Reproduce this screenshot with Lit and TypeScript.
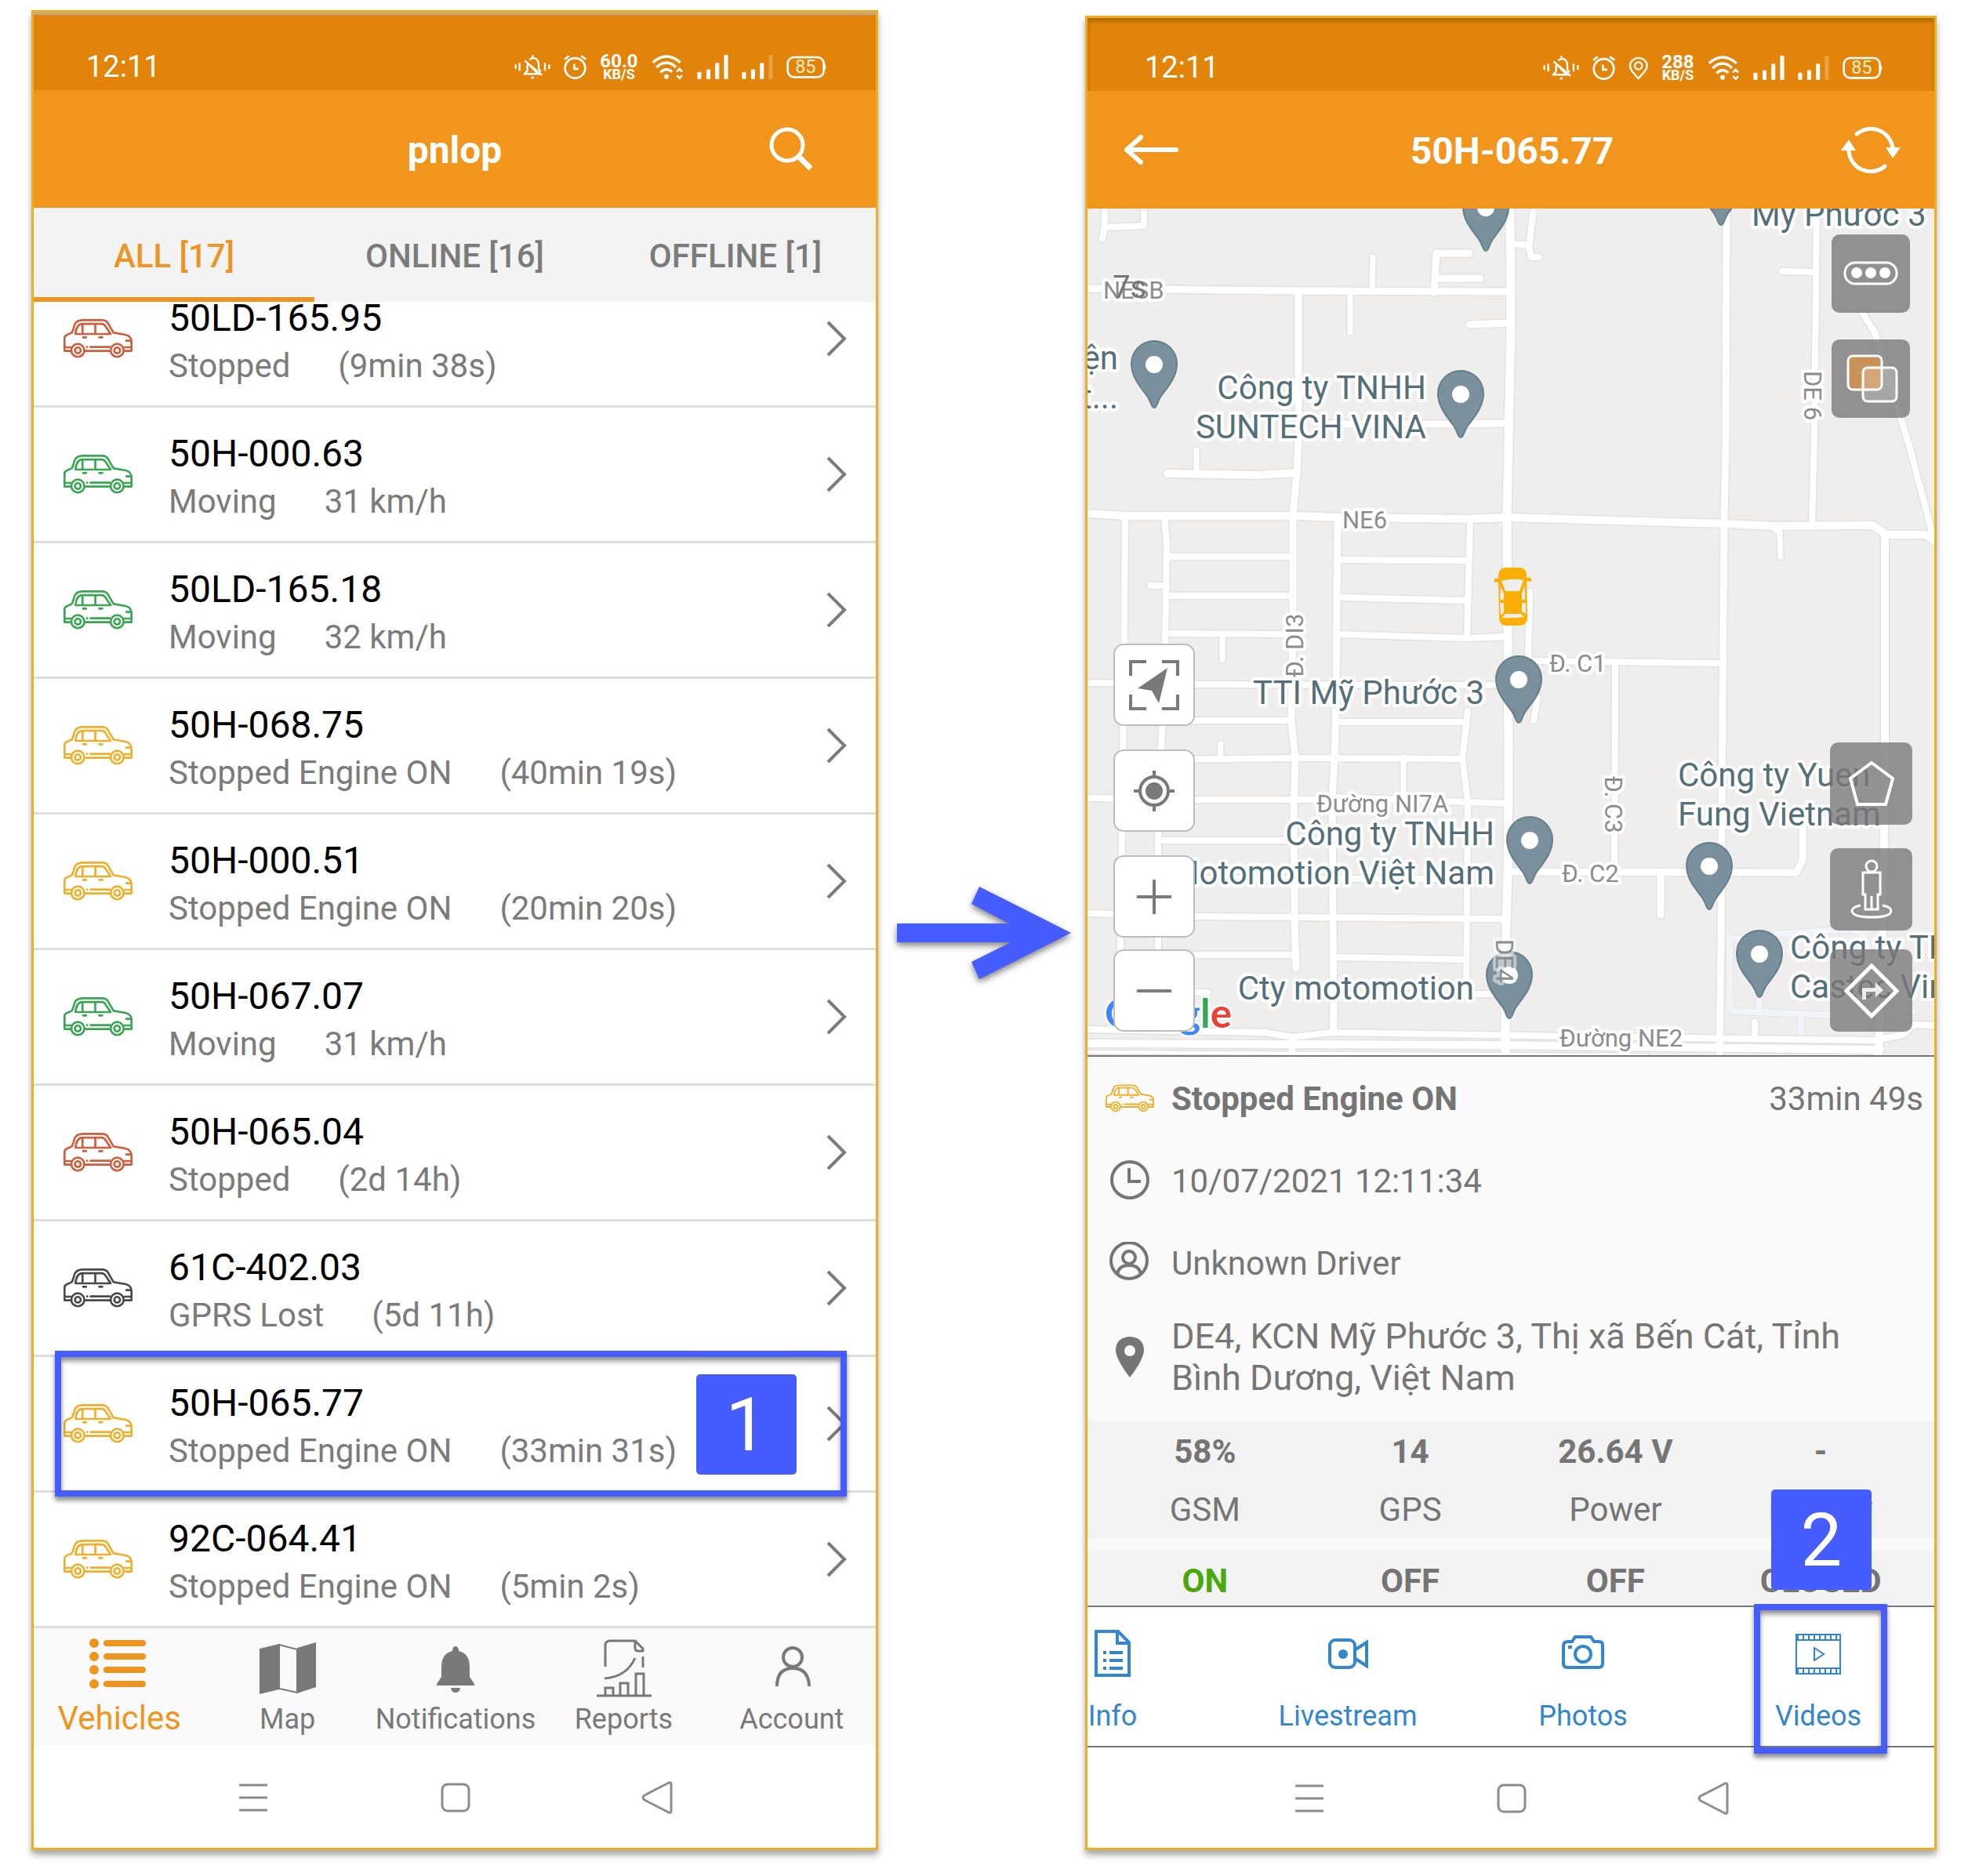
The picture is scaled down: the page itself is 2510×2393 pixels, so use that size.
import { LitElement, html, svg, css, nothing } from "lit";
import { customElement, property } from "lit/decorators.js";
import { classMap } from "lit/directives/class-map.js";

type State = "stopped" | "moving" | "idle" | "lost";

interface Vehicle {
  plate: string;
  state: State;
  status: string;
  detail: string;
  step?: string;
}

const VEHICLES: Vehicle[] = [
  { plate: "50LD-165.95", state: "stopped", status: "Stopped", detail: "(9min 38s)" },
  { plate: "50H-000.63", state: "moving", status: "Moving", detail: "31 km/h" },
  { plate: "50LD-165.18", state: "moving", status: "Moving", detail: "32 km/h" },
  { plate: "50H-068.75", state: "idle", status: "Stopped Engine ON", detail: "(40min 19s)" },
  { plate: "50H-000.51", state: "idle", status: "Stopped Engine ON", detail: "(20min 20s)" },
  { plate: "50H-067.07", state: "moving", status: "Moving", detail: "31 km/h" },
  { plate: "50H-065.04", state: "stopped", status: "Stopped", detail: "(2d 14h)" },
  { plate: "61C-402.03", state: "lost", status: "GPRS Lost", detail: "(5d 11h)" },
  { plate: "50H-065.77", state: "idle", status: "Stopped Engine ON", detail: "(33min 31s)", step: "1" },
  { plate: "92C-064.41", state: "idle", status: "Stopped Engine ON", detail: "(5min 2s)" },
];

const carIcon = html`<svg class="car" viewBox="62 120 265 150" aria-hidden="true">
  <g fill="none" stroke="currentColor" stroke-width="8" stroke-linejoin="round" stroke-linecap="round">
    <path d="M90 242H66V192Q66 184 76 180L94 172Q100 160 103 147Q108 125 134 124H210Q226 124 233 136L254 172L300 180Q323 186 323 206V242H294M144 242H241" />
    <path d="M108 177Q112 138 134 138H208Q218 138 223 147L243 177ZM135 139V176M184 139V176" />
    <path d="M137 190H149M199 190H211M303 203H321M67 228H90M295 228H321M166 227H240M152 227h1" />
    <circle cx="117" cy="240" r="25" /><circle cx="117" cy="240" r="11" />
    <circle cx="268" cy="240" r="25" /><circle cx="268" cy="240" r="11" />
  </g>
</svg>`;

const chevron = html`<svg class="chevron" viewBox="0 0 28 48" aria-hidden="true">
  <path d="M3 3L24 24L3 45" fill="none" stroke="currentColor" stroke-width="4" />
</svg>`;

@customElement("status-bar")
export class StatusBar extends LitElement {
  @property() speed = "";
  @property({ type: Boolean }) located = false;

  static styles = css`
    :host { display: flex; align-items: center; justify-content: space-between; color: #fff; }
    .time { font-size: 38px; line-height: 44px; }
    .icons { display: flex; align-items: center; gap: 17px; }
    svg { display: block; height: 31px; }
    .rate { display: flex; flex-direction: column; align-items: center; font-weight: 700; font-size: 24px; line-height: 20px; }
    .unit { font-size: 18px; line-height: 14px; }
    .battery text { font-size: 70px; }
  `;

  render() {
    return html`
      <span class="time">12:11</span>
      <div class="icons">
        <svg viewBox="40 46 138 93" fill="none" stroke="#fff" stroke-width="7">
          <path d="M45 83V100M60 77V107M157 77V107M173 83V100M75 119H144M80 118L90 106V86M98 65Q108 54 122 60Q132 66 133 82V100L141 110M80 68L146 124M104 133H115M110 47V56" />
          <path d="M90 78V106L82 118H128Z" stroke-width="5" />
        </svg>
        <svg viewBox="230 49 87 92" fill="none" stroke="#fff" stroke-width="8">
          <circle cx="273" cy="99" r="38" /><path d="M270 83V102H286M233 66L250 53M296 53L314 66" />
        </svg>
        ${this.located
          ? html`<svg viewBox="366 46 76 93" fill="none" stroke="#fff" stroke-width="7">
              <path d="M404 134L380 106Q371 94 372 81A33 32 0 0 1 437 81Q438 94 428 106Z" stroke-linejoin="round" />
              <circle cx="404" cy="85" r="14" />
            </svg>`
          : nothing}
        <span class="rate"><span>${this.speed}</span><span class="unit">KB/S</span></span>
        <svg viewBox="693 45 124 93" fill="none" stroke="#fff" stroke-width="10">
          <path d="M698 74Q750 28 803 74M712 93Q750 58 786 92M727 112Q750 90 772 110" />
          <circle cx="750" cy="128" r="9" fill="#fff" stroke="none" />
          <path d="M790 109L800 99L810 109M790 124L800 134L810 124" stroke-width="8" />
        </svg>
        <svg viewBox="859 47 118 91" fill="#fff">
          <rect x="860" y="111" width="15" height="27" rx="4" /><rect x="894" y="101" width="15" height="37" rx="4" />
          <rect x="927" y="77" width="15" height="61" rx="4" /><rect x="960" y="47" width="15" height="91" rx="4" />
        </svg>
        <svg viewBox="859 47 118 91" fill="#fff">
          <rect x="860" y="111" width="15" height="27" rx="4" /><rect x="894" y="101" width="15" height="37" rx="4" />
          <rect x="927" y="77" width="15" height="61" rx="4" /><rect x="960" y="47" width="15" height="91" rx="4" opacity=".25" />
        </svg>
        <svg class="battery" viewBox="1199 46 152 93">
          <rect x="1204" y="55" width="138" height="76" rx="24" fill="none" stroke="#fff" stroke-width="8" />
          <path d="M1343 80q7 2 7 13t-7 13z" fill="#fff" />
          <text x="1272" y="116" text-anchor="middle" fill="#ffeec8">85</text>
        </svg>
      </div>
    `;
  }
}

@customElement("system-keys")
export class SystemKeys extends LitElement {
  static styles = css`
    :host { display: flex; align-items: center; justify-content: center; background: #fff; }
    button { width: 258px; height: 100px; padding: 2px 0 0 2px; border: 0; background: none; display: flex; align-items: center; justify-content: center; }
    svg { width: 42px; height: 42px; }
  `;

  render() {
    return html`
      <button aria-label="Recent apps">
        <svg viewBox="0 0 42 42"><path d="M3 5H39M3 21H39M3 37H39" stroke="#8c8c8c" stroke-width="3" /></svg>
      </button>
      <button aria-label="Home">
        <svg viewBox="0 0 42 42"><rect x="4" y="4" width="34" height="34" rx="7" fill="none" stroke="#8c8c8c" stroke-width="3" /></svg>
      </button>
      <button aria-label="Back">
        <svg viewBox="0 0 42 42"><path d="M35 2Q38 1 38 4V38Q38 41 35 40L4 24Q0 21 4 18Z" fill="none" stroke="#8c8c8c" stroke-width="3" stroke-linejoin="round" /></svg>
      </button>
    `;
  }
}

const NAV_ITEMS = [
  {
    label: "Vehicles",
    icon: svg`<g fill="currentColor"><circle cx="10" cy="13" r="6"/><circle cx="10" cy="30" r="6"/><circle cx="10" cy="47" r="6"/><circle cx="10" cy="65" r="6"/>
      <rect x="22" y="9" width="54" height="8" rx="4"/><rect x="22" y="26" width="54" height="8" rx="4"/><rect x="22" y="43" width="54" height="8" rx="4"/><rect x="22" y="61" width="54" height="8" rx="4"/></g>`,
  },
  {
    label: "Map",
    icon: svg`<path d="M6 20L31 14V72L6 78ZM54 19L78 12V69L54 77Z" fill="currentColor"/><path d="M31 15L54 21V76L31 71Z" fill="none" stroke="currentColor" stroke-width="2"/>`,
  },
  {
    label: "Notifications",
    icon: svg`<path d="M42 17Q46 17 46 23Q60 26 60 44V56L66 65V67H18V65L24 56V44Q24 26 38 23Q38 17 42 17ZM36 70H48Q47 76 42 76Q37 76 36 70Z" fill="currentColor"/>`,
  },
  {
    label: "Reports",
    icon: svg`<path d="M19 43V16Q19 10 25 10H57L67 20V24M57 10V19Q57 23 61 23H67M67 30V44M18 58Q46 56 57 32M8 80H78M19 80V70H29V80M38 80V64H48V80M58 80V52H68V80" fill="none" stroke="currentColor" stroke-width="3"/>`,
  },
  {
    label: "Account",
    icon: svg`<g fill="none" stroke="currentColor" stroke-width="4"><circle cx="43" cy="31" r="12"/><path d="M23 68V66Q24 45 43 45T64 66V68"/></g>`,
  },
];

@customElement("vehicle-list")
export class VehicleList extends LitElement {
  static styles = css`
    :host { display: block; background: #fff; }
    * { box-sizing: border-box; }
    status-bar { height: 99px; box-sizing: border-box; padding: 39px 63px 0 67px; background: #e18409; box-shadow: inset 0 3px 0 #bdaa8c; }
    .header { display: grid; grid-template-columns: 1fr auto 1fr; align-items: center; height: 150px; padding: 0 80px; background: #f1951d; color: #fff; }
    h1 { grid-column: 2; margin: 0; padding-top: 3px; font-size: 48px; line-height: 60px; font-weight: 700; }
    button { font: inherit; color: inherit; border: 0; padding: 0; background: none; }
    .search { justify-self: end; display: flex; }
    .search svg { width: 56px; height: 56px; }
    .tabs { display: grid; grid-template-columns: repeat(3, 1fr); height: 120px; background: #f3f3f3; color: #7b7b7b; }
    .tab { padding-top: 3px; font-size: 42px; font-weight: 500; }
    .tab.active { color: #ea9526; box-shadow: inset 0 -6px 0 #ee9520; }
    ul { margin: 0; padding: 0; list-style: none; overflow: hidden; }
    li { position: relative; height: 173px; border-bottom: 3px solid #dedede; }
    li:first-child { margin-top: -38px; }
    .row { display: flex; align-items: center; height: 170px; padding: 0 36px 0 38px; color: #7b7b7b; text-decoration: none; }
    .car { display: block; width: 88px; height: 50px; margin-right: 46px; flex: none; }
    .stopped { color: #cf5f3c; }
    .moving { color: #3aa653; }
    .idle { color: #eeb02c; }
    .lost { color: #4a4a4a; }
    .text { flex: 1; align-self: flex-start; padding-top: 29px; }
    .plate { display: block; font-size: 48px; line-height: 60px; color: #000; }
    .sub { display: flex; gap: 61px; font-size: 42px; line-height: 62px; }
    .chevron { width: 28px; height: 48px; }
    .mark { position: absolute; z-index: 1; inset: -8px 37px -8px 27px; border: 8px solid #455cff; box-shadow: 0 5px 6px rgba(0, 0, 0, 0.45), inset 0 5px 6px rgba(0, 0, 0, 0.45); }
    .step { position: absolute; z-index: 2; top: 22px; right: 101px; width: 128px; height: 128px; border-radius: 5px; background: #455cff; color: #fff; font-size: 94px; line-height: 130px; text-align: center; }
    nav { display: grid; grid-template-columns: repeat(5, 1fr); height: 149px; padding: 6px 0 0 2px; background: #f9f9f9; color: #7b7879; }
    .item { display: flex; flex-direction: column; align-items: center; color: inherit; text-decoration: none; font-size: 36px; line-height: 52px; }
    .item svg { width: 84px; height: 84px; }
    .item.active { color: #ee9520; font-size: 42px; line-height: 50px; }
    system-keys { height: 131px; }
  `;

  render() {
    return html`
      <status-bar speed="60.0"></status-bar>
      <header class="header">
        <h1>pnlop</h1>
        <button class="search" aria-label="Search">
          <svg viewBox="0 0 56 56" fill="none" stroke="#fff">
            <circle cx="23" cy="23" r="20" stroke-width="5" /><path d="M37 37L53 53" stroke-width="7" />
          </svg>
        </button>
      </header>
      <div class="tabs" role="tablist">
        <button class="tab active" role="tab" aria-selected="true">ALL [17]</button>
        <button class="tab" role="tab" aria-selected="false">ONLINE [16]</button>
        <button class="tab" role="tab" aria-selected="false">OFFLINE [1]</button>
      </div>
      <ul>
        ${VEHICLES.map(
          (v) => html`<li>
            <a class="row" href="#${v.plate}">
              <span class=${v.state}>${carIcon}</span>
              <span class="text">
                <span class="plate">${v.plate}</span>
                <span class="sub"><span>${v.status}</span><span>${v.detail}</span></span>
              </span>
              ${chevron}
            </a>
            ${v.step ? html`<div class="mark"></div><div class="step">${v.step}</div>` : nothing}
          </li>`
        )}
      </ul>
      <nav>
        ${NAV_ITEMS.map(
          (n, i) => html`<a class=${classMap({ item: true, active: i === 0 })} href="#${n.label}">
            <svg viewBox="0 0 84 84" aria-hidden="true">${n.icon}</svg>${n.label}
          </a>`
        )}
      </nav>
      <system-keys></system-keys>
    `;
  }
}

interface Road {
  d: string;
  w: number;
}

const ROADS: Road[] = [
  { w: 11, d: "M1926 266L1927 414L1922 660L1924 980L1923 1112L1920 1213V1346" },
  { w: 9, d: "M1389 368L1656 371L1927 372M1832 323H1874M1832 323L1829 373M1833 355H1888M1874 414L1926 412M1827 541L1921 540M1690 541H1830" },
  { w: 9, d: "M1656 371V560L1654 603L1649 657V793L1647 920L1652 967L1650 1030L1651 1173L1653 1235" },
  { w: 7, d: "M1722 371V424M1751 328L1750 373M1526 574V602M1559 810V842M1557 949L1556 966M1790 966V1020" },
  { w: 8, d: "M1956 266L1950 314L1953 328H1963M1930 311L1950 313M1409 266V289L1406 304M1409 290L1459 288V266" },
  { w: 9, d: "M2202 266L2201 560L2199 667L2197 893L2195 1197L2193 1346" },
  { w: 8, d: "M2317 266L2314 560L2311 670M2273 346L2314 347" },
  { w: 8, d: "M2376 400L2391 424L2436 572L2467 690" },
  { w: 10, d: "M1489 604L1606 606L1654 603M1387 655L1434 658H1649L1713 660L1870 662L1924 660L2199 668L2263 671L2388 670L2406 682H2456L2470 692" },
  { w: 7, d: "M2260 672L2270 680L2271 711" },
  { w: 10, d: "M2404 682V980L2401 1197L2396 1346" },
  { w: 8, d: "M1435 658L1433 893L1429 1210V1313M1485 658L1488 693L1486 820L1477 1070V1230" },
  { w: 8, d: "M1488 710H1649M1488 760H1649M1467 747H1488M1488 808L1649 809" },
  { w: 9, d: "M1706 660L1704 893L1702 970L1699 1020L1701 1317" },
  { w: 8, d: "M1709 714L1874 715M1709 762L1871 766M1709 809L1870 814L1924 812M1875 663L1871 814M1872 907L1865 967L1872 1023L1870 1268" },
  { w: 8, d: "M1389 871L1527 873L1906 874H1924M1486 919H1645M1706 921H1870M1480 969L1652 967L1865 968" },
  { w: 8, d: "M1951 755L1949 840M1949 843L2195 846M1961 890L1956 919M2060 847L2059 1112" },
  { w: 8, d: "M1389 1018L1527 1020H1677L1700 1017L1924 1025M1481 1072H1713M1480 1121H1870" },
  { w: 9, d: "M1926 1112L2291 1113L2299 1097V1053M2118 1113V1167" },
  { w: 8, d: "M1389 1165L1527 1169L1920 1172M1480 1218H1652M1706 1221L1870 1224M1527 1266H1540M1870 1268H1920" },
  { w: 8, d: "M1389 1313L1613 1317L1649 1323L1699 1317L2220 1325L2391 1327L2427 1320L2441 1307L2467 1308M2238 1304V1324M1648 1323V1346" },
  { w: 10, d: "M1389 1331L1900 1333L2398 1339" },
  { w: 4, d: "M1389 1342L2100 1346" },
];

const LANES = "M2206 1196V1280Q2206 1290 2216 1290L2360 1296L2440 1290M2297 1294V1322M2244 1270V1290M2206 1198L2260 1192L2350 1186Q2380 1184 2382 1210V1240";

const PINS = [
  [1895, 320], [2195, 287], [1472, 520], [1863, 558], [1937, 922],
  [1951, 1127], [2180, 1160], [2244, 1272], [1925, 1299],
];

interface Place {
  x: number;
  y: number;
  text: string;
  end?: boolean;
}

const PLACES: Place[] = [
  { x: 2234, y: 288, text: "Mỹ Phước 3" },
  { x: 1426, y: 471, text: "Bệnh viện", end: true },
  { x: 1426, y: 521, text: "Quốc t...", end: true },
  { x: 1819, y: 509, text: "Công ty TNHH", end: true },
  { x: 1819, y: 559, text: "SUNTECH VINA", end: true },
  { x: 1893, y: 898, text: "TTI Mỹ Phước 3", end: true },
  { x: 1906, y: 1078, text: "Công ty TNHH", end: true },
  { x: 1906, y: 1128, text: "Motomotion Việt Nam", end: true },
  { x: 2140, y: 1003, text: "Công ty Yuen" },
  { x: 2140, y: 1053, text: "Fung Vietnam" },
  { x: 2283, y: 1223, text: "Công ty TNHH" },
  { x: 2283, y: 1273, text: "Castec Vina" },
  { x: 1880, y: 1275, text: "Cty motomotion", end: true },
];

const STREETS = [
  { x: 1407, y: 381, r: 0, text: "NESB" },
  { x: 1712, y: 674, r: 0, text: "NE6" },
  { x: 1662, y: 864, r: -90, text: "Đ. DI3" },
  { x: 1976, y: 857, r: 0, text: "Đ. C1" },
  { x: 1679, y: 1036, r: 0, text: "Đường NI7A" },
  { x: 1992, y: 1125, r: 0, text: "Đ. C2" },
  { x: 2047, y: 990, r: 90, text: "Đ. C3" },
  { x: 2301, y: 473, r: 90, text: "DE 6" },
  { x: 1989, y: 1335, r: 0, text: "Đường NE2" },
];

@customElement("map-view")
export class MapView extends LitElement {
  static styles = css`
    :host { display: block; position: relative; border-bottom: 2px solid #777; }
    .map { display: block; width: 100%; height: auto; background: #efeeec; }
    .place { font-size: 42px; fill: #546f7a; stroke: #fff; stroke-width: 8px; stroke-linejoin: round; paint-order: stroke; }
    .street { font-size: 31px; fill: #8c8c8c; stroke: #fff; stroke-width: 8px; stroke-linejoin: round; paint-order: stroke; }
    .faint { stroke: rgba(255, 255, 255, 0.5); }
    .counter { font-size: 40px; fill: #757575; }
    .logo { font-family: Lato, sans-serif; font-size: 51px; font-weight: 700; stroke: #fff; stroke-width: 5px; paint-order: stroke; }
    .tools { position: absolute; display: flex; flex-direction: column; }
    .left { left: 33px; bottom: 30px; gap: 30px; }
    .top { right: 31px; top: 33px; gap: 34px; }
    .bottom { right: 28px; bottom: 30px; gap: 30px; }
    button { box-sizing: border-box; display: flex; align-items: center; justify-content: center; width: 105px; height: 105px; padding: 0; border: 0; border-radius: 10px; background: rgba(122, 120, 121, 0.8); }
    .top button { width: 100px; height: 100px; }
    .left button { width: 104px; border: 2px solid #bdbdbd; border-radius: 13px; background: #fff; }
    .left button:last-child { margin-top: -15px; }
    .bottom button:last-child { margin-top: -6px; }
    button svg { width: 84px; height: 84px; }
  `;

  render() {
    return html`
      <svg class="map" viewBox="1387 266 1080 1080" role="img" aria-label="Map">
        <g fill="none" stroke-linejoin="round" stroke-linecap="round">
          <path d=${LANES} stroke="#e2e5e9" stroke-width="10" /><path d=${LANES} stroke="#f1f4f8" stroke-width="8" />
          ${ROADS.map((r) => svg`<path d=${r.d} stroke="#e3e2e1" stroke-width=${r.w + 3} />`)}
          ${ROADS.map((r) => svg`<path d=${r.d} stroke="#fff" stroke-width=${r.w} />`)}
        </g>
        ${PINS.map(
          ([x, y]) => svg`<g transform="translate(${x} ${y})">
            <path d="M0 0C-4 0 -3 -6 -9 -15C-16 -25 -29 -38 -29 -56A29 29 0 0 1 29 -56C29 -38 16 -25 9 -15C3 -6 4 0 0 0Z" fill="#7a909c" stroke="#637f8b" stroke-width="2"/>
            <circle cy="-55" r="11" fill="#fff"/></g>`
        )}
        ${STREETS.map(
          (s) => svg`<text class="street" transform="translate(${s.x} ${s.y}) rotate(${s.r})">${s.text}</text>`
        )}
        <text class="street faint" transform="translate(1908 1198) rotate(90)">DE4</text>
        ${PLACES.map(
          (p) => svg`<text class="place" x=${p.x} y=${p.y} text-anchor=${p.end ? "end" : "start"}>${p.text}</text>`
        )}
        <text class="counter" x="1419" y="380">7s</text>
        <g transform="translate(1929 761)">
          <path d="M-18 -26Q-18 -37 -8 -37H8Q18 -37 18 -26L19 26Q19 37 8 37H-7Q-17 37 -17 26Z" fill="#fbae05" />
          <path d="M-17 -22Q-24 -25 -23 -19L-17 -19M17 -23Q24 -26 24 -20L18 -20" fill="#fbae05" stroke="#fbae05" />
          <path d="M-14 -20Q0 -24 14 -21L9 -7H-9ZM-15 -13L-11 -4V4H-16ZM16 -14L12 -4V4H16ZM-16 8H-11V20L-15 24ZM12 8H17V22L12 19ZM-13 27L-9 22H10L15 26Q0 28 -13 27Z" fill="#efeeec" />
        </g>
        <text class="logo" x="1409" y="1311"><tspan fill="#4285f4">G</tspan><tspan fill="#ea4335">o</tspan><tspan fill="#fbbc05">o</tspan><tspan fill="#4285f4">g</tspan><tspan fill="#34a853">l</tspan><tspan fill="#ea4335">e</tspan></text>
      </svg>
      <div class="tools left">
        <button aria-label="Fit to vehicle">
          <svg viewBox="0 0 84 84"><path d="M12 30V12H32M52 12H72V30M72 54V72H52M32 72H12V54" fill="none" stroke="#7b7879" stroke-width="4" /><path d="M59 20L48 65L39 49L21 46Z" fill="#7b7879" /></svg>
        </button>
        <button aria-label="My location">
          <svg viewBox="0 0 84 84"><g fill="none" stroke="#7b7879" stroke-width="4"><circle cx="42" cy="42" r="18" /><path d="M42 16V26M42 58V68M16 42H26M58 42H68" /></g><circle cx="42" cy="42" r="11" fill="#7b7879" /></svg>
        </button>
        <button aria-label="Zoom in"><svg viewBox="0 0 84 84"><path d="M20 42H64M42 20V64" stroke="#7b7879" stroke-width="4" /></svg></button>
        <button aria-label="Zoom out"><svg viewBox="0 0 84 84"><path d="M20 42H64" stroke="#7b7879" stroke-width="4" /></svg></button>
      </div>
      <div class="tools top">
        <button aria-label="More">
          <svg viewBox="0 0 84 84"><rect x="9" y="28" width="66" height="27" rx="13" fill="none" stroke="#fff" stroke-width="3" /><g fill="#fff"><circle cx="24" cy="41" r="7" /><circle cx="42" cy="41" r="7" /><circle cx="60" cy="41" r="7" /></g></svg>
        </button>
        <button aria-label="Layers">
          <svg viewBox="0 0 84 84" stroke="#fff" stroke-width="3"><rect x="13" y="13" width="43" height="43" rx="6" fill="#c9925a" /><rect x="32" y="28" width="43" height="43" rx="6" fill="#fff" fill-opacity=".2" /></svg>
        </button>
      </div>
      <div class="tools bottom">
        <button aria-label="Geofence"><svg viewBox="0 0 84 84"><path d="M42 15L69 35L60 68H24L15 35Z" fill="none" stroke="#fff" stroke-width="4" /></svg></button>
        <button aria-label="Street view">
          <svg viewBox="0 0 84 84" fill="none" stroke="#fff" stroke-width="3"><circle cx="42" cy="12" r="7" /><path d="M31 20H53V48H50V67H34V48H31ZM42 50V67" /><path d="M28 62Q17 64 17 69Q18 77 42 77T67 69Q67 64 56 62" /></svg>
        </button>
        <button aria-label="Directions">
          <svg viewBox="0 0 84 84"><path d="M42 10L74 42L42 74L10 42Z" fill="none" stroke="#fff" stroke-width="5" /><path d="M30 53V38H47V31L57 41L47 50V43H35V53Z" fill="#fff" opacity=".85" /></svg>
        </button>
      </div>
    `;
  }
}

const STATS = [
  { value: "58%", label: "GSM" },
  { value: "14", label: "GPS" },
  { value: "26.64 V", label: "Power" },
  { value: "-", label: "Battery" },
];

const SWITCHES = ["ON", "OFF", "OFF", "CLOSED"];

const ACTIONS = [
  {
    label: "Info",
    icon: svg`<path d="M11 4H39L53 18V60H11ZM38 4V19H53" stroke-width="4"/><path d="M28 31H45M28 41H45M28 51H45M20 31h4M20 41h4M20 51h4" stroke-width="4"/>`,
  },
  {
    label: "Livestream",
    icon: svg`<rect x="9" y="15" width="32" height="35" rx="7"/><path d="M42 27L56 18V48L42 39"/><circle cx="26" cy="33" r="6" fill="currentColor" stroke="none"/>`,
  },
  {
    label: "Photos",
    icon: svg`<path d="M13 17H18L22 11H42L46 17H52Q57 17 57 22V45Q57 50 52 50H12Q7 50 7 45V22Q7 17 13 17Z"/><circle cx="32" cy="33" r="10"/><path d="M13 24h5"/>`,
  },
  {
    label: "Videos",
    icon: svg`<g stroke-width="2"><path d="M4 8H60V58H4ZM4 15H60M4 51H60M27 25V41L39 33Z"/></g><path d="M5 11.5H60M5 54.5H60" stroke-dasharray="2 5" stroke-width="6"/>`,
  },
];

@customElement("vehicle-detail")
export class VehicleDetail extends LitElement {
  static styles = css`
    :host { display: block; background: #fafafa; color: #757575; }
    * { box-sizing: border-box; }
    status-bar { height: 93px; box-sizing: border-box; padding: 33px 66px 0 73px; background: #e18409; box-shadow: inset 0 5px 5px #b56c08; }
    .header { display: grid; grid-template-columns: 1fr auto 1fr; align-items: center; height: 150px; padding: 0 43px 0 46px; background: #f1951d; color: #fff; }
    h1 { margin: 0; padding-top: 3px; font-size: 48px; line-height: 60px; font-weight: 700; }
    button { font: inherit; color: inherit; border: 0; padding: 0; background: none; display: flex; }
    .refresh { justify-self: end; }
    .back svg { width: 72px; height: 40px; }
    .refresh svg { width: 76px; height: 64px; }
    .line { display: grid; grid-template-columns: 107px 1fr auto; align-items: center; height: 105px; padding: 1px 14px 0 0; font-size: 42px; line-height: 53px; }
    .line > :first-child { justify-self: center; }
    .line svg { width: 54px; height: 54px; display: block; }
    .line .car { width: 62px; height: 36px; color: #eeb02c; }
    .address { height: 149px; padding-bottom: 14px; font-size: 45px; }
    .address span { max-width: 900px; }
    .stats { display: grid; grid-template-columns: repeat(4, 1fr); margin: 0; padding: 3px 14px 0 19px; background: #f3f3f3; text-align: center; font-size: 42px; line-height: 74px; }
    .values { height: 150px; margin-bottom: 16px; }
    .switches { height: 70px; padding-top: 2px; overflow: hidden; font-weight: 700; }
    .stat { display: flex; flex-direction: column-reverse; justify-content: flex-end; }
    dd { margin: 0; font-weight: 700; }
    .on { color: #4aa80a; }
    .lower { position: relative; }
    .step { position: absolute; top: -148px; right: 80px; width: 128px; height: 128px; border-radius: 5px; background: #455cff; color: #fff; font-size: 94px; line-height: 130px; text-align: center; }
    .mark { position: absolute; top: -2px; right: 60px; bottom: -8px; width: 170px; border: 8px solid #455cff; box-shadow: 0 5px 6px rgba(0, 0, 0, 0.45), inset 0 5px 6px rgba(0, 0, 0, 0.45); }
    nav { display: flex; justify-content: flex-end; height: 181px; overflow: hidden; background: #fff; border-top: 2px solid #777; border-bottom: 2px solid #777; }
    .item { flex: none; width: 300px; display: flex; flex-direction: column; align-items: center; gap: 23px; padding: 27px 0 0 4px; color: #3186cc; text-decoration: none; font-size: 36px; line-height: 50px; }
    .item svg { width: 64px; height: 64px; fill: none; stroke: currentColor; stroke-width: 4px; }
    system-keys { height: 128px; }
  `;

  render() {
    return html`
      <status-bar speed="288" located></status-bar>
      <header class="header">
        <button class="back" aria-label="Back">
          <svg viewBox="0 0 72 40" fill="none" stroke="#fff" stroke-width="6" stroke-linecap="round" stroke-linejoin="round"><path d="M67 20H5M22 4L4 20L22 36" /></svg>
        </button>
        <h1>50H-065.77</h1>
        <button class="refresh" aria-label="Refresh">
          <svg viewBox="0 0 76 64"><g fill="none" stroke="#fff" stroke-width="5" stroke-linecap="round"><path d="M20 12A28 28 0 0 1 66 30M10 34A28 28 0 0 0 56 53" /></g><path d="M0 33H19L10 19ZM57 29H76L66 43Z" fill="#fff" /></svg>
        </button>
      </header>
      <map-view></map-view>
      <div class="line">${carIcon}<strong>Stopped Engine ON</strong><span>33min 49s</span></div>
      <div class="line">
        <svg viewBox="0 0 54 54" fill="none" stroke="currentColor" stroke-width="4"><circle cx="27" cy="26" r="23" /><path d="M26 11V28H41" /></svg>
        <span>10/07/2021 12:11:34</span>
      </div>
      <div class="line">
        <svg viewBox="0 0 54 54" fill="none" stroke="currentColor" stroke-width="4"><circle cx="26" cy="24" r="23" /><circle cx="26" cy="20" r="8" /><path d="M11 41Q13 30 26 30T41 41" /></svg>
        <span>Unknown Driver</span>
      </div>
      <div class="line address">
        <svg viewBox="0 0 54 54"><path d="M27 1Q45 2 45 19Q44 31 27 53Q10 31 9 19Q9 2 27 1ZM27 12A7 7 0 1 0 27 26A7 7 0 1 0 27 12Z" fill="currentColor" /></svg>
        <span>DE4, KCN Mỹ Phước 3, Thị xã Bến Cát, Tỉnh Bình Dương, Việt Nam</span>
      </div>
      <dl class="stats values">
        ${STATS.map((s) => html`<div class="stat"><dt>${s.label}</dt><dd>${s.value}</dd></div>`)}
      </dl>
      <div class="stats switches">
        ${SWITCHES.map((s) => html`<span class=${classMap({ on: s === "ON" })}>${s}</span>`)}
      </div>
      <div class="lower">
        <nav>
          ${ACTIONS.map(
            (a) => html`<a class="item" href="#${a.label}"><svg viewBox="0 0 64 64" aria-hidden="true">${a.icon}</svg>${a.label}</a>`
          )}
        </nav>
        <div class="step">2</div>
        <div class="mark"></div>
      </div>
      <system-keys></system-keys>
    `;
  }
}

@customElement("app-root")
export class AppRoot extends LitElement {
  static styles = css`
    :host { display: block; background: #fff; font-family: Roboto, "Noto Sans", sans-serif; }
    .page { display: grid; grid-template-columns: minmax(0, 1080fr) minmax(0, 264fr) minmax(0, 1086fr); align-items: end; padding: 13px 40px 33px; }
    .phone { border: 3px solid #ecae24; box-shadow: 0 6px 8px rgba(0, 0, 0, 0.35); }
    .arrow { align-self: center; width: 100%; margin-top: 6px; filter: drop-shadow(0 4px 4px rgba(0, 0, 0, 0.5)); }
  `;

  render() {
    return html`<main class="page">
      <vehicle-list class="phone"></vehicle-list>
      <svg class="arrow" viewBox="0 0 264 160" role="img" aria-label="Next">
        <path d="M24 68H167L119 43L129 21L246 80L129 139L119 117L169 92H24Z" fill="#455cff" />
      </svg>
      <vehicle-detail class="phone"></vehicle-detail>
    </main>`;
  }
}
